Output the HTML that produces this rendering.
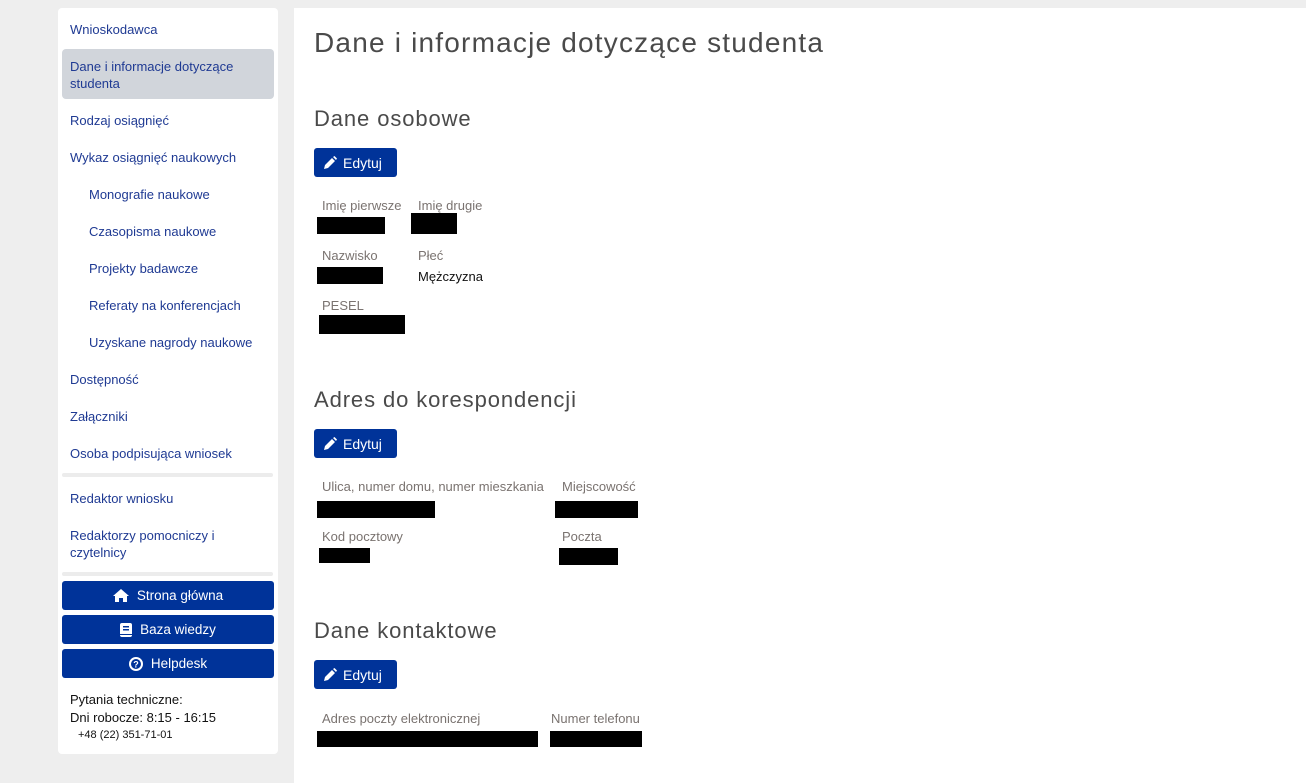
<!DOCTYPE html>
<html><head><meta charset="utf-8"><style>
*{margin:0;padding:0;box-sizing:border-box}
body{width:1306px;height:783px;background:#eeeeee;font-family:"Liberation Sans",sans-serif;position:relative;overflow:hidden}
.abs{position:absolute}
#side{left:58px;top:8px;width:220px;height:746px;background:#fff;border-radius:4px}
#main{left:294px;top:8px;width:1012px;height:775px;background:#fff}
.nav{position:absolute;left:70px;font-size:13px;color:#1f3a93;line-height:17px;white-space:nowrap}
.sub{left:89px}
.active{position:absolute;left:62px;top:49px;width:212px;height:50px;background:#d1d5db;border-radius:4px}
.sep{position:absolute;left:62px;width:211px;height:4px;background:#ececec;border-radius:2px}
.btn{position:absolute;left:62px;width:212px;height:29px;background:#003399;border-radius:3px;color:#fff;font-size:13.5px;display:flex;align-items:center;justify-content:center;gap:8px}
.h1{position:absolute;left:314px;top:27px;font-size:28px;color:#4a4a4a;font-weight:normal;letter-spacing:1.2px;white-space:nowrap}
.h2{position:absolute;left:314px;font-size:22px;color:#4a4a4a;letter-spacing:0.9px;white-space:nowrap}
.ed{position:absolute;left:314px;width:83px;height:29px;background:#003399;border-radius:3px;color:#fff;font-size:14px;display:flex;align-items:center;padding-left:9px;gap:6px}
.lb{position:absolute;font-size:13px;color:#7a7370;white-space:nowrap}
.bl{position:absolute;background:#000}
.tx{position:absolute;font-size:13px;color:#111}
</style></head><body>
<div id="side" class="abs"></div>
<div id="main" class="abs"></div>
<div class="active"></div>
<div class="nav" style="top:21px">Wnioskodawca</div>
<div class="nav" style="top:58px">Dane i informacje dotyczące<br>studenta</div>
<div class="nav" style="top:112px">Rodzaj osiągnięć</div>
<div class="nav" style="top:149px">Wykaz osiągnięć naukowych</div>
<div class="nav sub" style="top:186px">Monografie naukowe</div>
<div class="nav sub" style="top:223px">Czasopisma naukowe</div>
<div class="nav sub" style="top:260px">Projekty badawcze</div>
<div class="nav sub" style="top:297px">Referaty na konferencjach</div>
<div class="nav sub" style="top:334px">Uzyskane nagrody naukowe</div>
<div class="nav" style="top:371px">Dostępność</div>
<div class="nav" style="top:408px">Załączniki</div>
<div class="nav" style="top:445px">Osoba podpisująca wniosek</div>
<div class="sep" style="top:473px"></div>
<div class="nav" style="top:490px">Redaktor wniosku</div>
<div class="nav" style="top:527px">Redaktorzy pomocniczy i<br>czytelnicy</div>
<div class="sep" style="top:572px"></div>
<div class="btn" style="top:581px"><svg width="16" height="13" viewBox="0 0 16 13"><path d="M8 0L0 7h2v6h4V9h4v4h4V7h2z" fill="#fff"/></svg>Strona główna</div>
<div class="btn" style="top:615px"><svg width="12" height="14" viewBox="0 0 12 14"><rect x="0" y="0" width="12" height="14" rx="2" fill="#fff"/><rect x="3" y="3" width="6" height="1.5" fill="#003399"/><rect x="3" y="6" width="6" height="1.5" fill="#003399"/><rect x="0" y="11" width="12" height="1" fill="#003399"/></svg>Baza wiedzy</div>
<div class="btn" style="top:649px"><svg width="14" height="14" viewBox="0 0 14 14"><circle cx="7" cy="7" r="6" fill="none" stroke="#fff" stroke-width="2"/><text x="7" y="10.5" font-size="9" font-weight="bold" fill="#fff" text-anchor="middle" font-family="Liberation Sans">?</text></svg>Helpdesk</div>
<div class="tx" style="left:70px;top:691px;line-height:18px">Pytania techniczne:<br>Dni robocze: 8:15 - 16:15</div>
<div class="tx" style="left:78px;top:729px;font-size:11px">+48 (22) 351-71-01</div>

<div class="h1">Dane i informacje dotyczące studenta</div>

<div class="h2" style="top:106px">Dane osobowe</div>
<div class="ed" style="top:148px"><svg width="14" height="14" viewBox="0 0 14 14"><path d="M1 13l1-4 7-7 3 3-7 7z M10 1l1.5-1 2.5 2.5-1 1.5z" fill="#fff"/></svg>Edytuj</div>
<div class="lb" style="left:322px;top:198px">Imię pierwsze</div>
<div class="lb" style="left:418px;top:198px">Imię drugie</div>
<div class="bl" style="left:317px;top:217px;width:68px;height:17px"></div>
<div class="bl" style="left:411px;top:213px;width:46px;height:21px"></div>
<div class="lb" style="left:322px;top:248px">Nazwisko</div>
<div class="lb" style="left:418px;top:248px">Płeć</div>
<div class="bl" style="left:317px;top:267px;width:66px;height:17px"></div>
<div class="tx" style="left:418px;top:269px">Mężczyzna</div>
<div class="lb" style="left:322px;top:298px">PESEL</div>
<div class="bl" style="left:319px;top:315px;width:86px;height:19px"></div>

<div class="h2" style="top:387px">Adres do korespondencji</div>
<div class="ed" style="top:429px"><svg width="14" height="14" viewBox="0 0 14 14"><path d="M1 13l1-4 7-7 3 3-7 7z M10 1l1.5-1 2.5 2.5-1 1.5z" fill="#fff"/></svg>Edytuj</div>
<div class="lb" style="left:322px;top:479px">Ulica, numer domu, numer mieszkania</div>
<div class="lb" style="left:562px;top:479px">Miejscowość</div>
<div class="bl" style="left:317px;top:501px;width:118px;height:17px"></div>
<div class="bl" style="left:555px;top:501px;width:83px;height:17px"></div>
<div class="lb" style="left:322px;top:529px">Kod pocztowy</div>
<div class="lb" style="left:562px;top:529px">Poczta</div>
<div class="bl" style="left:319px;top:548px;width:51px;height:15px"></div>
<div class="bl" style="left:559px;top:548px;width:59px;height:17px"></div>

<div class="h2" style="top:618px">Dane kontaktowe</div>
<div class="ed" style="top:660px"><svg width="14" height="14" viewBox="0 0 14 14"><path d="M1 13l1-4 7-7 3 3-7 7z M10 1l1.5-1 2.5 2.5-1 1.5z" fill="#fff"/></svg>Edytuj</div>
<div class="lb" style="left:322px;top:711px">Adres poczty elektronicznej</div>
<div class="lb" style="left:551px;top:711px">Numer telefonu</div>
<div class="bl" style="left:317px;top:731px;width:221px;height:16px"></div>
<div class="bl" style="left:550px;top:731px;width:92px;height:16px"></div>
</body></html>
